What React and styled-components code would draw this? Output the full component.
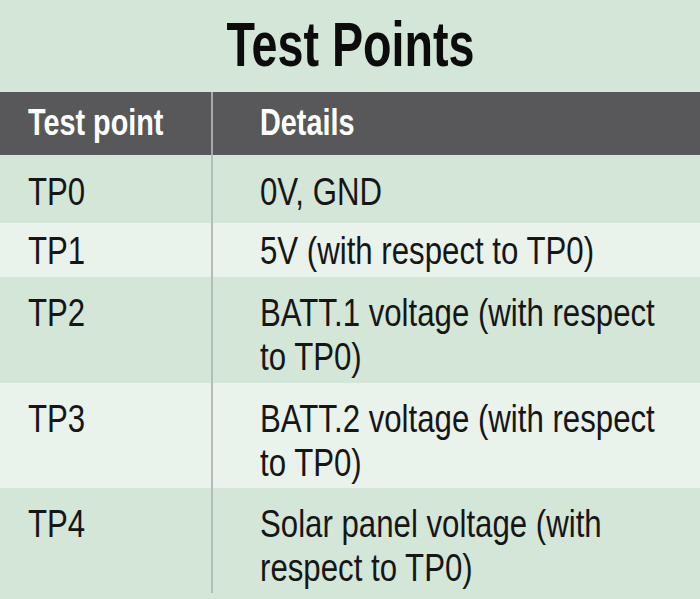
import React from 'react'
import styled, { createGlobalStyle } from 'styled-components'

const GlobalStyle = createGlobalStyle`
html, body {
  margin: 0;
  padding: 0;
  background: #d3e6d8;
  overflow: hidden;
}
`

const Page = styled.div`
width: 700px;
height: 599px;
background: #d3e6d8;
font-family: 'Liberation Sans', Arial, sans-serif;
color: #161616;
overflow: hidden;
`

const Title = styled.h1`
margin: 0;
padding: 9px 0 13px;
height: 70px;
text-align: center;
font-size: 63px;
line-height: 70px;
font-weight: 700;
color: #0c0c0c;
`

const Squeeze = styled.span`
display: inline-block;
transform: scaleX(${p => p.$x});
transform-origin: center;
`

const Table = styled.div`
display: grid;
grid-template-columns: 211px 1fr;
`

const Row = styled.div`
display: contents;
`

const Cell = styled.div`
overflow: hidden;
background: ${p => p.$bg};
padding: ${p => p.$top}px 0 ${p => p.$bottom}px;
${p => p.$right && `
  border-left: 2px solid ${p.$line};
  padding-left: 47px;
  padding-right: 28px;
`}
${p => !p.$right && `padding-left: 28px;`}
`

const HeadText = styled.div`
width: 125%;
transform: scaleX(0.8);
transform-origin: left top;
font-size: 36px;
line-height: 45px;
font-weight: 700;
color: #ffffff;
`

const BodyText = styled.div`
width: 125%;
transform: scaleX(0.8);
transform-origin: left top;
font-size: 39px;
line-height: 44px;
color: #161616;
`

const rows = [
  { tp: 'TP0', detail: '0V, GND', top: 15, bottom: 9, light: false },
  { tp: 'TP1', detail: '5V (with respect to TP0)', top: 6, bottom: 4, light: true },
  { tp: 'TP2', detail: 'BATT.1 voltage (with respect to TP0)', top: 14, bottom: 4, light: false },
  { tp: 'TP3', detail: 'BATT.2 voltage (with respect to TP0)', top: 14, bottom: 3, light: true },
  { tp: 'TP4', detail: 'Solar panel voltage (with respect to TP0)', top: 14, bottom: 3, light: false },
]

const App = () => {
  return (
    <Page>
      <GlobalStyle />
      <Title>
        <Squeeze $x={0.74}>Test Points</Squeeze>
      </Title>
      <Table>
        <Row>
          <Cell $bg="#58585a" $top={8} $bottom={10}>
            <HeadText>Test point</HeadText>
          </Cell>
          <Cell $bg="#58585a" $top={8} $bottom={10} $right $line="#a9a9a9">
            <HeadText>Details</HeadText>
          </Cell>
        </Row>
        {rows.map(r => {
          const bg = r.light ? '#e9f2eb' : '#d3e6d8'
          return (
            <Row key={r.tp}>
              <Cell $bg={bg} $top={r.top} $bottom={r.bottom}>
                <BodyText>{r.tp}</BodyText>
              </Cell>
              <Cell $bg={bg} $top={r.top} $bottom={r.bottom} $right $line="#b6bcb8">
                <BodyText>{r.detail}</BodyText>
              </Cell>
            </Row>
          )
        })}
      </Table>
    </Page>
  )
}

export default App
